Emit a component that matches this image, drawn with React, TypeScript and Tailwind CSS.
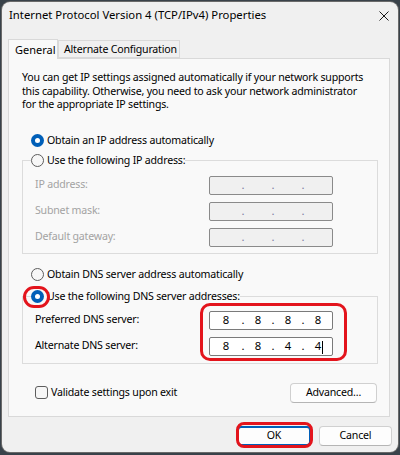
import React from 'react'

const font = { fontFamily: '"Segoe UI", "Noto Sans", sans-serif' }

type RadioProps = { label: string; checked?: boolean }

const Radio = ({ label, checked }: RadioProps) => (
    <div className="flex items-center h-[16px] gap-[3px] text-black whitespace-nowrap">
        {checked ? (
            <span className="w-[13px] h-[13px] rounded-full bg-[#005fb8] flex items-center justify-center">
                <span className="w-[5px] h-[5px] rounded-full bg-white" />
            </span>
        ) : (
            <span className="w-[13px] h-[13px] rounded-full border border-[#5d5d5d] bg-[#f7f7f7]" />
        )}
        <span>{label}</span>
    </div>
)

type IpFieldProps = { label: string; values?: string[]; disabled?: boolean; cursor?: boolean }

const IpField = ({ label, values, disabled, cursor }: IpFieldProps) => {
    const segs = values ?? ['', '', '', '']
    const widths = ['w-[30px]', 'w-[26px]', 'w-[26px]', 'w-[26px]']
    return (
        <div className="flex items-center h-[19px]">
            <span className={`w-[174px] ${disabled ? 'text-[#a3a3a3]' : 'text-black'}`}>{label}</span>
            <div
                className={`w-[124px] h-[19px] rounded-[2px] border flex items-center pl-[1px] text-[11.3px] tracking-normal ${
                    disabled ? 'bg-[#f0f0f0] border-[#8a8a8a]' : 'bg-white border-[#7a7a7a]'
                }`}
            >
                {segs.map((v, i) => (
                    <React.Fragment key={i}>
                        <span className={`${widths[i]} text-center relative`}>
                            {v}
                            {cursor && i === 3 && (
                                <span className="absolute top-[3px] left-[17px] w-px h-[13px] bg-black" />
                            )}
                        </span>
                        {i < 3 && (
                            <span className={`w-[4px] text-center ${disabled ? 'text-[#7a7aa0]' : 'text-black'}`}>.</span>
                        )}
                    </React.Fragment>
                ))}
            </div>
        </div>
    )
}

const Button = ({ label, w, primary }: { label: string; w: string; primary?: boolean }) => (
    <div
        className={`${w} h-[20px] rounded-[4px] flex items-center justify-center bg-[#fdfdfd] text-black ${
            primary ? 'border-2 border-[#005fb8]' : 'border border-[#d0d0d0] border-b-[#b5b5b5]'
        }`}
    >
        {label}
    </div>
)

export default function App() {
    return (
        <div className="w-[400px] h-[455px] bg-[#39424a] pt-[2px] pl-[2px] text-[10.6px] tracking-[-0.2px] overflow-hidden" style={font}>
            <div className="relative w-[396px] h-[450px] rounded-[8px] bg-[#f0f0f0] shadow-[0_0_0_1px_#6a6a6a]">
                {/* TITLE BAR */}
                <div className="h-[27px] flex items-center justify-between pl-[7px] pr-[9px]">
                    <span className="text-black whitespace-nowrap text-[11.3px] tracking-normal">Internet Protocol Version 4 (TCP/IPv4) Properties</span>
                    <svg width="10" height="10" viewBox="0 0 10 10" className="mt-[1px]">
                        <path d="M0.5 0.5 L9.5 9.5 M9.5 0.5 L0.5 9.5" stroke="#1a1a1a" strokeWidth="1" />
                    </svg>
                </div>

                {/* TABS */}
                <div className="mt-[10px] ml-[6px] flex items-end h-[19px] whitespace-nowrap">
                    <div className="relative z-10 -mb-px w-[50px] h-[20px] border border-b-0 border-[#d9d9d9] bg-[#f9f9f9] pl-[6px] pt-[2px] text-black text-[11px] tracking-normal">
                        General
                    </div>
                    <div className="w-[122px] h-[18px] border border-[#d9d9d9] bg-[#f0f0f0] pl-[5px] text-black leading-[17px]">
                        Alternate Configuration
                    </div>
                </div>

                {/* PANEL */}
                <div className="ml-[6px] w-[382px] h-[359px] border border-[#d9d9d9] bg-[#f9f9f9] pl-[13px]">
                    <p className="mt-[12px] leading-[13.5px] text-black whitespace-nowrap">
                        You can get IP settings assigned automatically if your network supports
                        <br />
                        this capability. Otherwise, you need to ask your network administrator
                        <br />
                        for the appropriate IP settings.
                    </p>

                    <div className="mt-[21px] ml-[9px]">
                        <Radio label="Obtain an IP address automatically" checked />
                    </div>

                    <fieldset className="mt-[4px] w-[356px] border border-[#dcdcdc] pl-[8px]">
                        <legend>
                            <Radio label="Use the following IP address:" />
                        </legend>
                        <div className="flex flex-col gap-[7px] pt-[7px] pb-[6px] ml-[4px]">
                            <IpField label="IP address:" disabled />
                            <IpField label="Subnet mask:" disabled />
                            <IpField label="Default gateway:" disabled />
                        </div>
                    </fieldset>

                    <div className="mt-[13px] ml-[9px]">
                        <Radio label="Obtain DNS server address automatically" />
                    </div>

                    <fieldset className="mt-[6px] w-[356px] border border-[#dcdcdc] pl-[8px]">
                        <legend>
                            <Radio label="Use the following DNS server addresses:" checked />
                        </legend>
                        <div className="flex flex-col gap-[7px] pt-[6px] pb-[7px] ml-[4px]">
                            <IpField label="Preferred DNS server:" values={['8', '8', '8', '8']} />
                            <IpField label="Alternate DNS server:" values={['8', '8', '4', '4']} cursor />
                        </div>
                    </fieldset>

                    <div className="mt-[19px] w-[356px] flex items-center justify-between">
                        <div className="ml-[13px] flex items-center gap-[3px] text-black">
                            <span className="w-[13px] h-[13px] rounded-[3px] border border-[#5d5d5d] bg-[#f6f6f6]" />
                            <span>Validate settings upon exit</span>
                        </div>
                        <div className="mr-[1px]">
                            <Button label="Advanced..." w="w-[87px]" />
                        </div>
                    </div>
                </div>

                {/* FOOTER */}
                <div className="mt-[9px] flex justify-end gap-[8px] pr-[6px]">
                    <Button label="OK" w="w-[74px]" primary />
                    <Button label="Cancel" w="w-[73px]" />
                </div>

                {/* RED ANNOTATIONS */}
                <div className="absolute left-[21px] top-[284px] w-[27px] h-[22px] rounded-full border-[3px] border-[#e3141c]" />
                <div className="absolute left-[198px] top-[301px] w-[147px] h-[58px] rounded-[10px] border-[3px] border-[#e3141c]" />
                <div className="absolute left-[234px] top-[420px] w-[77px] h-[26px] rounded-[8px] border-[3px] border-[#e3141c]" />
            </div>
        </div>
    )
}
